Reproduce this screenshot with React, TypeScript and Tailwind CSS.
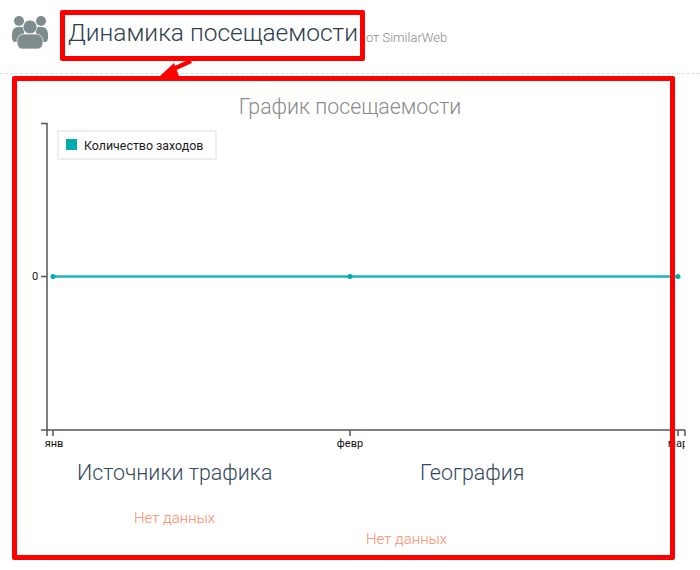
export default function App() {
  return (
    <div className="relative h-[570px] w-[700px] overflow-hidden bg-white font-['Roboto',sans-serif]">
      <header className="flex h-[74px] items-start border-b border-dashed border-[#dddddd] pl-3">
        <svg className="mt-[15px] h-[35px] w-[36px]" viewBox="0 0 36 35" fill="#7f8c8d">
          <circle cx="7" cy="6" r="5" />
          <circle cx="29" cy="6" r="5" />
          <path d="M0 20c0-5 2-8 6-8h6v15H3c-2 0-3-2-3-4zM36 20c0-5-2-8-6-8h-6v15h9c2 0 3-2 3-4z" />
          <circle cx="18" cy="12" r="7" stroke="#ffffff" strokeWidth="0.75" />
          <path d="M5 27c0-5 3-8 7-8h12c4 0 7 3 7 8 0 4-2 7-5 7H10c-3 0-5-3-5-7z" stroke="#ffffff" strokeWidth="0.75" />
        </svg>
        <h1 className="ml-5 mt-[16px] text-[24.5px] font-light leading-[34px] text-[#2c3e50]">Динамика посещаемости</h1>
        <span className="ml-2 mt-[31px] text-[13px] font-light leading-[14px] text-[#888888]">от SimilarWeb</span>
      </header>
      <main>
        <h2 className="mt-[21px] text-center text-[21.3px] leading-[24px] font-light text-[#8a8a8a]">График посещаемости</h2>
        <svg className="mt-[-2px] block h-[334px] w-[700px]" viewBox="0 117 700 334">
          <defs>
            <clipPath id="chart-clip">
              <rect x="0" y="117" width="685" height="334" />
            </clipPath>
          </defs>
          <g stroke="#555555" strokeWidth="1.5" fill="none">
            <path d="M41 123.5H47V430M41 276.5H47M41 430H685" />
            <path d="M53 430V436M350 430V436M678 430V436M685 430V436M47 430V436" />
          </g>
          <path d="M53 276.5H678" stroke="#1cb5b8" strokeWidth="2.5" />
          <circle cx="53" cy="276.5" r="2.5" fill="#00a9ad" />
          <circle cx="350" cy="276.5" r="2.5" fill="#00a9ad" />
          <circle cx="678" cy="276.5" r="2.5" fill="#00a9ad" />
          <g clipPath="url(#chart-clip)" fontFamily="Roboto, sans-serif" fontSize="11" fill="#111111" textAnchor="middle">
            <text x="35" y="280">0</text>
            <text x="54" y="447">янв</text>
            <text x="350" y="447">февр</text>
            <text x="678" y="447">мар</text>
          </g>
          <rect x="58" y="131" width="158" height="28" fill="#ffffff" stroke="#eeeeee" strokeWidth="2" />
          <rect x="66" y="139" width="11" height="11" fill="#00acac" />
          <text x="84" y="150" fontFamily="Roboto, sans-serif" fontSize="12.4" fill="#1a1a1a">Количество заходов</text>
        </svg>
        <section className="mt-[9px] grid grid-cols-[348px_1fr] items-start">
          <div className="pl-[77px]">
            <h3 className="text-[21.4px] font-light leading-[26px] text-[#34495e]">Источники трафика</h3>
            <p className="ml-[57px] mt-[23px] text-[15px] font-light leading-[18px] text-[#ff8a65]">Нет данных</p>
          </div>
          <div className="pl-[72px]">
            <h3 className="text-[21.4px] font-light leading-[26px] text-[#34495e]">География</h3>
            <p className="ml-[-54px] mt-[44px] text-[15px] font-light leading-[18px] text-[#ff8a65]">Нет данных</p>
          </div>
        </section>
      </main>
      <div className="absolute left-[60px] top-[10px] h-[51px] w-[305px] rounded-[2px] border-[5px] border-[#ff0000]" />
      <div className="absolute left-[12px] top-[76px] h-[484px] w-[663px] rounded-[2px] border-[5px] border-[#ff0000]" />
      <svg className="absolute left-[155px] top-[58px] h-[24px] w-[40px]" viewBox="0 0 40 24">
        <path d="M36 3L14 13" stroke="#ff0000" strokeWidth="4.5" fill="none" />
        <path d="M5 18L19 5L24 18Z" fill="#ff0000" />
      </svg>
    </div>
  );
}
